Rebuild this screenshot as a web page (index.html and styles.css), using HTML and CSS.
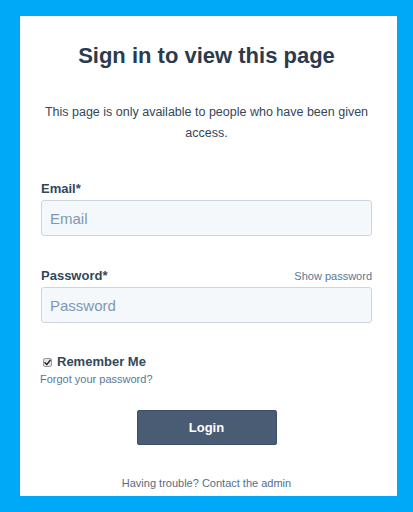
FILE: index.html
```html
<!DOCTYPE html>
<html lang="en">
<head>
<meta charset="utf-8">
<title>Sign in to view this page</title>
<link rel="stylesheet" href="styles.css">
</head>
<body>
<main class="card">
  <h1 class="title">Sign in to view this page</h1>
  <p class="intro">This page is only available to people who have been given access.</p>
  <form class="form">
    <div class="field">
      <div class="label-row">
        <label class="label" for="email">Email*</label>
      </div>
      <input class="input" id="email" type="email" placeholder="Email">
    </div>
    <div class="field field-password">
      <div class="label-row">
        <label class="label" for="password">Password*</label>
        <a class="show-link" href="#">Show password</a>
      </div>
      <input class="input" id="password" type="password" placeholder="Password">
    </div>
    <div class="remember">
      <span class="check"><svg viewBox="0 0 9 9" width="9" height="9"><path d="M2 4.6 L3.8 6.6 L7.2 2.2" fill="none" stroke="#222" stroke-width="1.4" stroke-linecap="round" stroke-linejoin="round"/></svg></span>
      <span class="remember-text">Remember Me</span>
    </div>
    <a class="forgot" href="#">Forgot your password?</a>
    <div class="actions">
      <button class="login" type="button">Login</button>
    </div>
  </form>
  <p class="trouble">Having trouble? <a class="contact" href="#">Contact the admin</a></p>
</main>
</body>
</html>
```

FILE: styles.css
```css
html, body {
  margin: 0;
  padding: 0;
}
body {
  background: #00a9f7;
  width: 413px;
  height: 512px;
  padding: 16px 16px 16px 20px;
  box-sizing: border-box;
  font-family: "Liberation Sans", Arial, sans-serif;
}
.card {
  background: #ffffff;
  width: 377px;
  height: 480px;
  box-sizing: border-box;
  padding: 27px 25px 0 21px;
  display: flex;
  flex-direction: column;
}
.title {
  margin: 0;
  font-size: 22px;
  line-height: 26px;
  font-weight: 700;
  color: #2b3b4e;
  text-align: center;
}
.intro {
  margin: 33px 0 0;
  font-size: 12.5px;
  line-height: 21px;
  color: #33475b;
  text-align: center;
}
.form {
  display: flex;
  flex-direction: column;
  margin: 37px 0 0;
}
.field {
  display: flex;
  flex-direction: column;
}
.field-password {
  margin-top: 32px;
}
.label-row {
  display: flex;
  justify-content: space-between;
  align-items: baseline;
  margin-bottom: 3px;
}
.label {
  font-size: 13px;
  line-height: 16px;
  font-weight: 700;
  color: #33475b;
}
.show-link {
  font-size: 11px;
  line-height: 14px;
  color: #5a7896;
  text-decoration: none;
}
.input {
  box-sizing: border-box;
  width: 100%;
  height: 36px;
  margin: 0;
  padding: 0 8px;
  border: 1px solid #cbd6e2;
  border-radius: 3px;
  background: #f5f8fa;
  font-family: "Liberation Sans", Arial, sans-serif;
  font-size: 15px;
  color: #33475b;
}
.input::placeholder {
  color: #7e97b3;
}
.remember {
  display: flex;
  align-items: center;
  margin-top: 31px;
  padding-left: 2px;
  height: 16px;
}
.check {
  width: 9px;
  height: 9px;
  box-sizing: border-box;
  border: 1px solid #9a9a9a;
  border-radius: 2px;
  background: #e6e6e6;
  display: flex;
  align-items: center;
  justify-content: center;
  margin-right: 5px;
  margin-top: 1px;
  overflow: hidden;
}
.check svg {
  flex: none;
}
.remember-text {
  font-size: 13px;
  line-height: 16px;
  font-weight: 700;
  color: #33475b;
}
.forgot {
  margin-top: 2px;
  margin-left: -1px;
  font-size: 11px;
  line-height: 14px;
  color: #5a7896;
  text-decoration: none;
  align-self: flex-start;
}
.actions {
  display: flex;
  justify-content: center;
  margin-top: 24px;
}
.login {
  width: 140px;
  height: 35px;
  box-sizing: border-box;
  border: 1px solid #3b4f67;
  border-radius: 2px;
  background: #4a5b74;
  color: #ffffff;
  font-family: "Liberation Sans", Arial, sans-serif;
  font-size: 13px;
  font-weight: 700;
  padding: 0;
}
.trouble {
  margin: 31px 0 0;
  font-size: 11px;
  line-height: 14px;
  color: #5b6b80;
  text-align: center;
}
.contact {
  color: #4f7090;
  text-decoration: none;
}
```
